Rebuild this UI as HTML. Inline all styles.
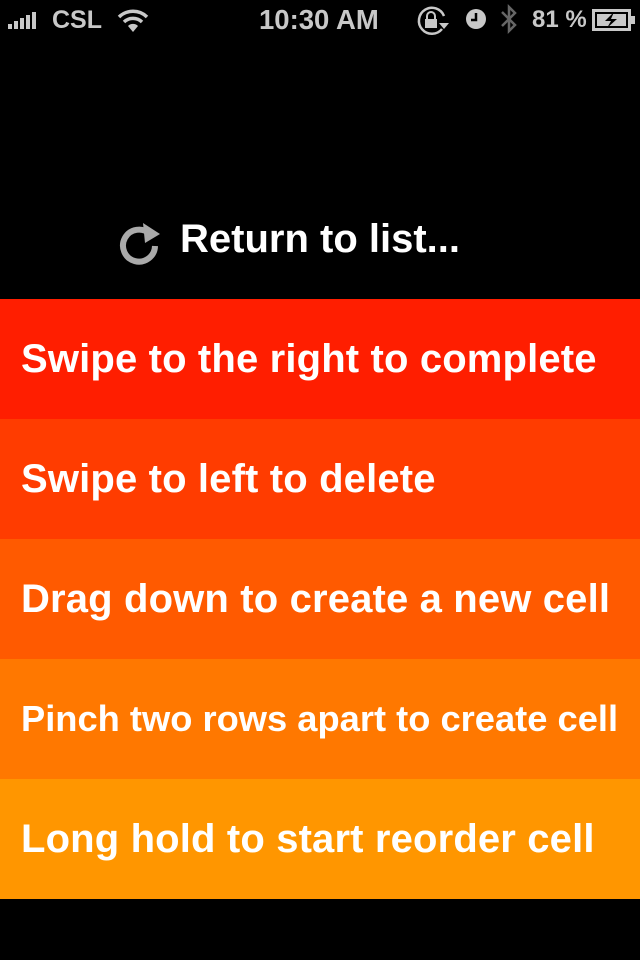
<!DOCTYPE html>
<html><head><style>
body{margin:0;width:640px;height:960px;background:#000;overflow:hidden;font-family:"Liberation Sans",sans-serif;position:relative}
.sb{position:absolute;top:0;height:40px;color:#c8c8c8;font-weight:bold;font-size:24px;line-height:40px}
.row{position:absolute;left:0;width:640px;height:120px;color:#fff;font-weight:bold;font-size:40px;letter-spacing:0.15px;line-height:120px;padding-left:21px;box-sizing:border-box;white-space:nowrap}
</style></head><body>
<div style="position:absolute;left:8px;top:13px;width:36px;height:16px">
<div style="position:absolute;left:0;bottom:0;width:4px;height:5px;background:#c8c8c8"></div>
<div style="position:absolute;left:6px;bottom:0;width:4px;height:8px;background:#c8c8c8"></div>
<div style="position:absolute;left:12px;bottom:0;width:4px;height:11px;background:#c8c8c8"></div>
<div style="position:absolute;left:18px;bottom:0;width:4px;height:14px;background:#c8c8c8"></div>
<div style="position:absolute;left:24px;bottom:0;width:4px;height:17px;background:#c8c8c8"></div>
</div>
<div class="sb" style="left:52px;font-size:25px">CSL</div>
<svg style="position:absolute;left:116px;top:8px" width="34" height="26" viewBox="0 0 34 26"><g fill="none" stroke="#c8c8c8" stroke-width="3.5"><path d="M3 9 A20 20 0 0 1 31 9"/><path d="M8 14 A13 13 0 0 1 26 14"/></g><path d="M12 18 A7 7 0 0 1 22 18 L17 24 Z" fill="#c8c8c8"/></svg>
<div class="sb" style="left:259px;font-size:27.5px">10:30 AM</div>
<svg style="position:absolute;left:416px;top:5px" width="36" height="32" viewBox="0 0 36 32"><path d="M26 24 A13 13 0 1 1 28 11" fill="none" stroke="#c8c8c8" stroke-width="2.5"/><path d="M23 18 L33 18 L28 24Z" fill="#c8c8c8"/><rect x="9" y="14" width="12" height="9" fill="#c8c8c8"/><path d="M11 14 V11 A4 4 0 0 1 19 11 V14" fill="none" stroke="#c8c8c8" stroke-width="2"/></svg>
<svg style="position:absolute;left:465px;top:8px" width="22" height="22"><circle cx="11" cy="11" r="10" fill="#c8c8c8"/><path d="M11 5 V12 H6" stroke="#000" stroke-width="2.5" fill="none"/></svg>
<svg style="position:absolute;left:499px;top:3px" width="20" height="33"><path d="M3 9 L16 22 L10 28 V4 L16 10 L3 23" fill="none" stroke="#666" stroke-width="2.5"/></svg>
<div class="sb" style="left:532px">81 %</div>
<svg style="position:absolute;left:592px;top:9px" width="44" height="22"><rect x="1.5" y="1.5" width="36" height="19" fill="none" stroke="#c8c8c8" stroke-width="3"/><rect x="5" y="5" width="29" height="12" fill="#c8c8c8"/><rect x="39" y="7" width="4" height="8" fill="#c8c8c8"/><path d="M22 3 L13 12 H19 L15 19 L25 10 H19 Z" fill="#000"/></svg>
<svg style="position:absolute;left:116px;top:214px" width="48" height="52" viewBox="0 0 48 52"><path d="M34 20 A16 16 0 1 0 39 32" fill="none" stroke="#aaa" stroke-width="6"/><path d="M27 9 L44 20 L29 29 Z" fill="#aaa"/></svg>
<div style="position:absolute;left:180px;top:216px;color:#fff;font-weight:bold;font-size:40px;line-height:46px">Return to list...</div>
<div class="row" style="top:299px;background:#ff1e00">Swipe to the right to complete</div>
<div class="row" style="top:419px;background:#ff3c00">Swipe to left to delete</div>
<div class="row" style="top:539px;background:#ff5a00">Drag down to create a new cell</div>
<div class="row" style="top:659px;background:#ff7800;font-size:36.3px;letter-spacing:0">Pinch two rows apart to create cell</div>
<div class="row" style="top:779px;background:#ff9600">Long hold to start reorder cell</div>
</body></html>
